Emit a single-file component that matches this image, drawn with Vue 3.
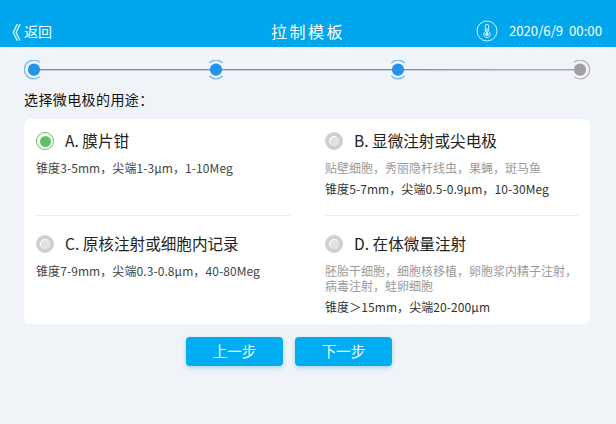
<template>
  <div class="page">
    <header class="topbar">
      <div class="back"><span class="chev">《</span>返回</div>
      <div class="title">拉制模板</div>
      <div class="status">
        <svg class="thermo" width="22" height="22" viewBox="0 0 22 22" fill="none" stroke="#fff">
          <circle cx="11" cy="11" r="10" stroke-width="0.8" />
          <path d="M9.3 11.6V6a1.7 1.7 0 0 1 3.4 0v5.6a3.2 3.2 0 1 1-3.4 0Z" stroke-width="0.8" />
          <circle cx="11" cy="14.2" r="1.6" fill="#fff" stroke="none" />
          <path d="M11 8.5v5" stroke-width="1.2" />
        </svg>
        <span>2020/6/9&nbsp;&nbsp;00:00</span>
      </div>
    </header>

    <div class="stepper">
      <div class="track"></div>
      <div v-for="s in steps" :key="s" class="node" :class="{ off: s === 4 }">
        <svg width="20" height="20" viewBox="0 0 20 20" fill="none">
          <path v-if="s === 1" d="M15.9 2.4A9.4 9.4 0 1 0 15.9 16.6" class="arc" />
          <path v-else-if="s === 4" d="M4.1 2.4A9.4 9.4 0 1 1 4.1 16.6" class="arc" />
          <path v-else d="M3.3 3A9.4 9.4 0 0 1 16.7 3M3.3 16A9.4 9.4 0 0 0 16.7 16" class="arc" />
          <circle cx="10" cy="10" r="6" class="glow" />
          <circle cx="10" cy="9.5" r="6" class="dot" />
        </svg>
      </div>
    </div>

    <div class="question">选择微电极的用途：</div>

    <main class="card">
      <section v-for="o in options" :key="o.key" class="option" :class="'opt-' + o.key">
        <div class="opt-head">
          <span class="radio" :class="{ on: o.on }"><i></i></span>
          <span class="opt-name">{{ o.name }}</span>
        </div>
        <p v-if="o.note" class="note">{{ o.note }}</p>
        <p class="spec">{{ o.spec }}</p>
      </section>
    </main>

    <div class="actions">
      <button class="btn">上一步</button>
      <button class="btn">下一步</button>
    </div>
  </div>
</template>

<script setup>
const steps = [1, 2, 3, 4]
const options = [
  { key: 'a', name: 'A. 膜片钳', on: true, spec: '锥度3-5mm，尖端1-3µm，1-10Meg' },
  { key: 'b', name: 'B. 显微注射或尖电极', note: '贴壁细胞，秀丽隐杆线虫，果蝇，斑马鱼', spec: '锥度5-7mm，尖端0.5-0.9µm，10-30Meg' },
  { key: 'c', name: 'C. 原核注射或细胞内记录', spec: '锥度7-9mm，尖端0.3-0.8µm，40-80Meg' },
  { key: 'd', name: 'D. 在体微量注射', note: '胚胎干细胞，细胞核移植，卵胞浆内精子注射，病毒注射，蛙卵细胞', spec: '锥度＞15mm，尖端20-200µm' }
]
</script>

<style>
html, body { margin: 0; background: #f0f3f7; }
</style>

<style scoped>
.page {
  width: 616px;
  height: 424px;
  overflow: hidden;
  background: #f0f3f7;
  font-family: "Noto Sans CJK SC", "Noto Sans", sans-serif;
  color: #222;
}
.topbar {
  height: 47px;
  background: #00a7ec;
  color: #fff;
  display: grid;
  grid-template-columns: 1fr auto 1fr;
  align-items: end;
  padding: 0 14px 0 10px;
}
.back { font-size: 14px; line-height: 20px; padding-bottom: 6px; display: flex; align-items: center; }
.chev { width: 21px; margin-left: -7px; font-size: 18px; line-height: 20px; flex: none; }
.title { font-size: 16px; line-height: 22px; letter-spacing: 2.5px; padding: 0 0 5px 4px; }
.status { justify-self: end; display: flex; align-items: center; gap: 11px; font-size: 13.2px; padding-bottom: 5px; line-height: 22px; }
.thermo { display: block; }

.stepper {
  position: relative;
  margin: 13px 26px 0 24px;
  display: flex;
  justify-content: space-between;
  height: 20px;
}
.track {
  position: absolute;
  left: 10px;
  right: 10px;
  top: 9px;
  height: 1px;
  background: linear-gradient(90deg, #4a9bc9 0, #4a9bc9 68%, #a9a9a9 85%, #a9a9a9 100%);
  box-shadow: 0 1px 0 rgba(140, 170, 190, 0.45);
}
.node { position: relative; width: 20px; height: 20px; }
.node svg { display: block; }
.arc { stroke: #74b8e6; stroke-width: 1.2; }
.glow { fill: #b8aee2; }
.dot { fill: #2194ee; }
.node.off .arc { stroke: #b4b4b4; }
.node.off .glow { fill: #c4c4c4; }
.node.off .dot { fill: #a0a0a0; }

.question { margin: 9px 0 0 24px; font-size: 14px; line-height: 20px; letter-spacing: 0.4px; color: #111; }

.card {
  margin: 10px 26px 0 24px;
  height: 205px;
  background: #fff;
  border-radius: 6px;
  display: grid;
  grid-template-columns: 254px 253px;
  grid-template-rows: 97px 108px;
  column-gap: 35px;
  padding: 0 12px;
}
.option { padding-top: 11px; }
.opt-a, .opt-b { border-bottom: 1px solid #e9ebed; }
.opt-c, .opt-d { padding-top: 17px; }
.opt-head { display: flex; align-items: center; gap: 11px; height: 22px; }
.radio {
  width: 18px;
  height: 18px;
  box-sizing: border-box;
  border-radius: 50%;
  background: #fff;
  border: 4px solid #cfcfcf;
  display: flex;
  align-items: center;
  justify-content: center;
}
.radio i { width: 9px; height: 9px; border-radius: 50%; background: #e2e2e2; }
.radio.on { border: 1.5px solid #5ec166; }
.radio.on i { width: 11px; height: 11px; background: #5ec166; }
.opt-name { font-size: 15.6px; line-height: 22px; padding-bottom: 2px; color: #222; }
.note { margin: 8px 0 0; font-size: 12px; line-height: 15px; color: #9a9a9a; }
.spec { margin: 8px 0 0; font-size: 12px; line-height: 16px; letter-spacing: 0.08px; color: #444; }
.note + .spec { margin-top: 6px; color: #333; }

.actions { margin-top: 13px; display: flex; justify-content: center; gap: 12px; padding-right: 38px; }
.btn {
  width: 97px;
  height: 29px;
  border: 0;
  border-radius: 4px;
  background: #00acf2;
  color: #fff;
  font: inherit;
  font-size: 14.5px;
  box-shadow: 0 2px 4px rgba(0, 150, 230, 0.3);
  padding: 0 0 2px;
}
</style>
